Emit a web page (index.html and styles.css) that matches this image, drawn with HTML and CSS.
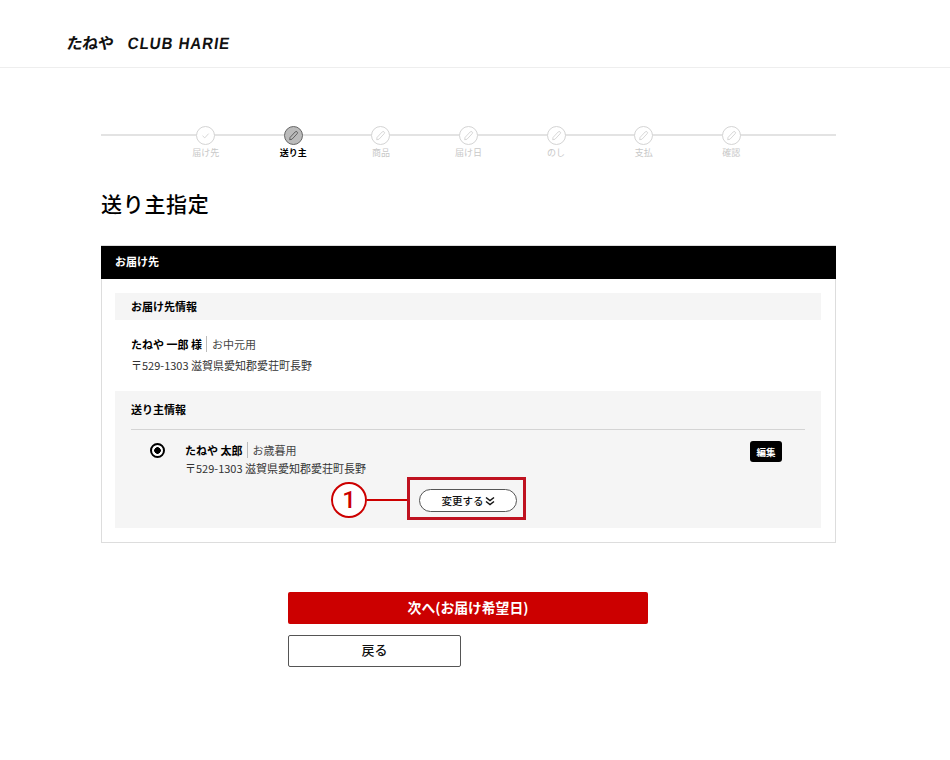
FILE: index.html
```html
<!DOCTYPE html>
<html lang="ja">
<head>
  <meta charset="UTF-8">
  <meta name="viewport" content="width=device-width, initial-scale=1.0">
  <title>送り主指定</title>
  <link rel="stylesheet" href="styles.css">
</head>
<body>
  <header class="site-header">
    <div class="logo"><span class="logo-jp">たねや</span><span class="logo-en">CLUB HARIE</span></div>
  </header>

  <main class="container">
    <ol class="stepper">
      <li class="step">
        <span class="step-icon">
          <svg viewBox="0 0 20 20"><path d="M6.5 10.3l2.6 2.5 4.6-5" /></svg>
        </span>
        <span class="step-label">届け先</span>
      </li>
      <li class="step current">
        <span class="step-icon">
          <svg viewBox="0 0 20 20"><path d="M6 12.2l6-6.4a1.5 1.5 0 0 1 2.3 2.1l-6.1 6.5-2.7.6z" /></svg>
        </span>
        <span class="step-label">送り主</span>
      </li>
      <li class="step">
        <span class="step-icon">
          <svg viewBox="0 0 20 20"><path d="M6 12.2l6-6.4a1.5 1.5 0 0 1 2.3 2.1l-6.1 6.5-2.7.6z" /></svg>
        </span>
        <span class="step-label">商品</span>
      </li>
      <li class="step">
        <span class="step-icon">
          <svg viewBox="0 0 20 20"><path d="M6 12.2l6-6.4a1.5 1.5 0 0 1 2.3 2.1l-6.1 6.5-2.7.6z" /></svg>
        </span>
        <span class="step-label">届け日</span>
      </li>
      <li class="step">
        <span class="step-icon">
          <svg viewBox="0 0 20 20"><path d="M6 12.2l6-6.4a1.5 1.5 0 0 1 2.3 2.1l-6.1 6.5-2.7.6z" /></svg>
        </span>
        <span class="step-label">のし</span>
      </li>
      <li class="step">
        <span class="step-icon">
          <svg viewBox="0 0 20 20"><path d="M6 12.2l6-6.4a1.5 1.5 0 0 1 2.3 2.1l-6.1 6.5-2.7.6z" /></svg>
        </span>
        <span class="step-label">支払</span>
      </li>
      <li class="step">
        <span class="step-icon">
          <svg viewBox="0 0 20 20"><path d="M6 12.2l6-6.4a1.5 1.5 0 0 1 2.3 2.1l-6.1 6.5-2.7.6z" /></svg>
        </span>
        <span class="step-label">確認</span>
      </li>
    </ol>

    <h1 class="page-title">送り主指定</h1>

    <section class="panel">
      <h2 class="panel-head">お届け先</h2>
      <div class="panel-body">
        <h3 class="sub-head">お届け先情報</h3>
        <div class="address">
          <p class="address-name"><b>たねや 一郎 様</b><span class="address-tag">お中元用</span></p>
          <p class="address-line">〒529-1303 滋賀県愛知郡愛荘町長野</p>
        </div>

        <div class="sender">
          <h3 class="sender-title">送り主情報</h3>
          <div class="sender-row">
            <span class="radio"></span>
            <div class="sender-info">
              <p class="sender-name"><b>たねや 太郎</b><span class="address-tag">お歳暮用</span></p>
              <p class="sender-line">〒529-1303 滋賀県愛知郡愛荘町長野</p>
            </div>
            <button class="edit-btn">編集</button>
          </div>
          <div class="change-row">
            <button class="change-btn">変更する<svg class="chevrons" viewBox="0 0 10 10"><path d="M1 1.5l4 3 4-3M1 5.5l4 3 4-3" /></svg></button>
            <span class="callout-box"></span>
            <span class="callout-line"></span>
            <span class="callout-num">1</span>
          </div>
        </div>
      </div>
    </section>

    <div class="actions">
      <button class="btn-next">次へ(お届け希望日)</button>
      <button class="btn-back">戻る</button>
    </div>
  </main>
</body>
</html>
```

FILE: styles.css
```css
* {
  box-sizing: border-box;
}

body {
  margin: 0;
  font-family: "Noto Sans CJK JP", "Noto Sans", sans-serif;
  color: #000;
  background-color: #fff;
}

h1, h2, h3, p, ol {
  margin: 0;
  padding: 0;
}

button {
  font-family: inherit;
  cursor: pointer;
}

.site-header {
  height: 68px;
  border-bottom: 1px solid #eee;
  padding: 27px 0 0 67px;
}

.logo {
  display: flex;
  align-items: center;
  height: 30px;
  color: #111;
  transform: skewX(-8deg);
}

.logo-jp {
  font-size: 16px;
  font-weight: 700;
  letter-spacing: -0.5px;
  width: 61px;
}

.logo-en {
  font-family: "Liberation Sans", sans-serif;
  font-size: 15px;
  font-weight: 700;
  letter-spacing: 1px;
  transform: scaleY(1.1);
}

.container {
  width: 735px;
  margin-left: 101px;
}

.stepper {
  display: flex;
  justify-content: center;
  list-style: none;
  margin-top: 57px;
  background: linear-gradient(#e3e3e3, #e3e3e3) no-repeat 0 9px / 100% 2px;
}

.step {
  width: 87.6px;
  display: flex;
  flex-direction: column;
  align-items: center;
  height: 34px;
}

.step-icon {
  width: 19px;
  height: 19px;
  margin-top: 0.5px;
  border: 1px solid #d4d4d4;
  border-radius: 50%;
  background-color: #fff;
}

.step-icon svg {
  display: block;
  width: 17px;
  height: 17px;
  fill: none;
  stroke: #d0d0d0;
  stroke-width: 1;
}

.step-label {
  margin-top: 1px;
  font-size: 9px;
  line-height: 13px;
  color: #c8c8c8;
}

.current .step-icon {
  background-color: #bbb;
  border-color: #666;
}

.current .step-icon svg {
  stroke: #444;
  stroke-width: 0.9;
}

.current .step-label {
  color: #000;
  font-weight: 700;
}

.page-title {
  margin-top: 28px;
  font-size: 21px;
  line-height: 32px;
  font-weight: 500;
  letter-spacing: 0.7px;
}

.panel {
  margin-top: 26px;
  border: 1px solid #ddd;
}

.panel-head {
  height: 33px;
  margin: 0 -1px;
  padding-left: 14px;
  background-color: #000;
  color: #fff;
  font-size: 11px;
  line-height: 30px;
  font-weight: 700;
}

.panel-body {
  padding: 14px 14px 14px 13px;
}

.sub-head {
  height: 27px;
  padding-left: 16px;
  background-color: #f5f5f5;
  font-size: 11px;
  line-height: 26px;
  font-weight: 700;
}

.address {
  padding: 13px 16px 16px;
  font-size: 11px;
}

.address-name {
  line-height: 22px;
}

.address-name b,
.sender-name b {
  font-weight: 700;
}

.address-tag {
  margin-left: 4px;
  padding-left: 5px;
  border-left: 1px solid #bbb;
  color: #444;
}

.address-line {
  line-height: 20px;
  color: #333;
}

.sender {
  height: 137px;
  padding: 7px 16px 0;
  background-color: #f5f5f5;
}

.sender-title {
  height: 32px;
  font-size: 11px;
  line-height: 22px;
  font-weight: 700;
  border-bottom: 1px solid #d4d4d4;
}

.sender-row {
  display: flex;
  align-items: flex-start;
  padding: 10px 23px 0 19px;
  font-size: 11px;
}

.radio {
  width: 15px;
  height: 15px;
  margin-top: 3px;
  border: 2px solid #000;
  border-radius: 50%;
  background: radial-gradient(circle, #000 0 3px, #fff 3.6px);
  flex: none;
}

.sender-info {
  flex: 1;
  margin-left: 20px;
}

.sender-name {
  line-height: 20px;
}

.sender-line {
  line-height: 17px;
  color: #333;
}

.edit-btn {
  width: 32px;
  height: 21px;
  margin-top: 1px;
  padding: 0;
  border: none;
  border-radius: 3px;
  background-color: #000;
  color: #fff;
  font-size: 9.5px;
  font-weight: 700;
}

.change-row {
  position: relative;
  display: flex;
  justify-content: center;
  margin-top: 12px;
}

.change-btn {
  display: flex;
  align-items: center;
  justify-content: center;
  gap: 1px;
  width: 98px;
  height: 23px;
  padding: 0 0 1px;
  border: 1px solid #555;
  border-radius: 12px;
  background-color: #fff;
  font-size: 10.5px;
  font-weight: 500;
  color: #111;
}

.chevrons {
  width: 10px;
  height: 10px;
  margin-top: 2px;
  fill: none;
  stroke: #111;
  stroke-width: 1.5;
}

.callout-box {
  position: absolute;
  left: 276px;
  top: -12px;
  width: 119px;
  height: 43px;
  border: 3px solid #bf1220;
}

.callout-line {
  position: absolute;
  left: 236px;
  top: 10px;
  width: 40px;
  height: 2px;
  background-color: #c00;
}

.callout-num {
  position: absolute;
  left: 200px;
  top: -7px;
  width: 36px;
  height: 36px;
  border: 2px solid #c00;
  border-radius: 50%;
  background-color: #fff;
  color: #c00;
  font-family: Roboto, sans-serif;
  font-size: 24px;
  line-height: 32px;
  font-weight: 500;
  text-align: center;
}

.actions {
  display: flex;
  flex-direction: column;
  align-items: flex-start;
  gap: 11px;
  margin: 49px 0 0 187px;
}

.btn-next {
  width: 360px;
  height: 32px;
  padding: 0 0 3px;
  border: none;
  border-radius: 2px;
  background-color: #c00;
  color: #fff;
  font-size: 13.8px;
  font-weight: 700;
}

.btn-back {
  width: 173px;
  height: 32px;
  padding: 0 0 4px;
  border: 1px solid #555;
  border-radius: 2px;
  background-color: #fff;
  color: #111;
  font-size: 13px;
  font-weight: 500;
}
```
